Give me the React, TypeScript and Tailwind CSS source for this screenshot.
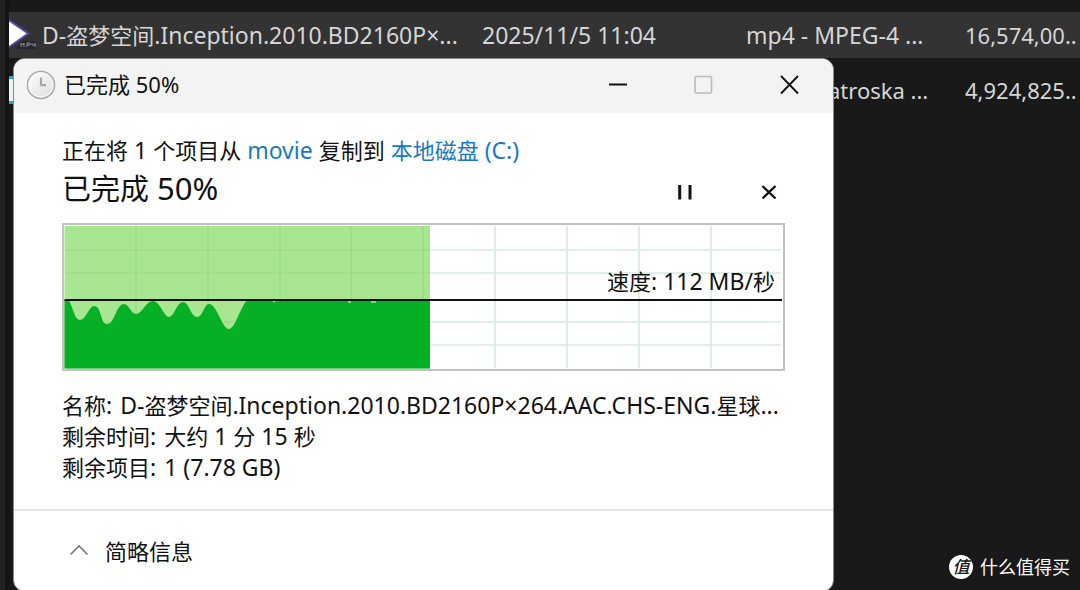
import React from "react";

const GRID_X = [74, 146, 218, 289, 361, 433, 505, 577, 649];
const GRID_Y = [27, 50, 99, 122];

function Cjk({ children }: { children: React.ReactNode }) {
  return <span className="text-[22px]">{children}</span>;
}

function VideoIcon() {
  return (
    <svg width="28" height="34" viewBox="0 0 28 34" aria-hidden="true" className="shrink-0">
      <path d="M0 1 L21 15.5 L0 30 Z" fill="#5b48a8" />
      <path d="M0 3.5 L17.5 15.5 L0 28 Z" fill="#fff" />
      <path d="M8 29 L13 23 H27 V31 H8 Z" fill="#262335" />
      <path d="M12 29 v-4 l1.5 2 l1.5 -2 v4 M18 29 v-4 h3 v2 h-3 M23 25 v2 h3 M26 25 v4" fill="none" stroke="#8f8f98" strokeWidth="1" />
    </svg>
  );
}

function ClockIcon() {
  return (
    <svg width="30" height="30" viewBox="0 0 30 30" aria-hidden="true" className="shrink-0">
      <defs>
        <linearGradient id="face" x1="0" y1="0" x2="1" y2="1">
          <stop offset="0" stopColor="#ffffff" />
          <stop offset="1" stopColor="#dcdcdc" />
        </linearGradient>
      </defs>
      <circle cx="15" cy="15" r="13.6" fill="url(#face)" stroke="#a6a6a6" strokeWidth="1.4" />
      <circle cx="15" cy="15" r="12" fill="none" stroke="#fafafa" strokeWidth="1" />
      <path d="M15 7.5 V15.2 H20" fill="none" stroke="#a8a8a8" strokeWidth="2.2" />
    </svg>
  );
}

function FileList() {
  return (
    <table className="w-full table-fixed border-collapse text-left text-[23px] leading-8 text-[#d6d6d6]">
      <colgroup>
        <col className="w-[473px]" />
        <col className="w-[264px]" />
        <col className="w-[219px]" />
        <col />
      </colgroup>
      <tbody>
        <tr className="h-[46px] bg-[#333333]">
          <td className="p-0">
            <div className="flex items-center gap-[5px] whitespace-nowrap">
              <VideoIcon />
              <span>D-<Cjk>盗梦空间</Cjk>.Inception.2010.BD2160P×...</span>
            </div>
          </td>
          <td className="whitespace-nowrap p-0">2025/11/5 11:04</td>
          <td className="whitespace-nowrap p-0">mp4 - MPEG-4 ...</td>
          <td className="whitespace-nowrap p-0 text-[22px]">16,574,00..</td>
        </tr>
        <tr className="h-[64px]">
          <td className="p-0">
            <svg width="28" height="28" viewBox="0 0 28 28" aria-hidden="true">
              <path d="M0 0 H28 V28 H0 Z" fill="#2fa5b5" />
              <path d="M0 3 H25 V25 H0 Z" fill="#e8f4f6" />
            </svg>
          </td>
          <td className="p-0" />
          <td className="whitespace-nowrap p-0 text-[22px]">mkv - Matroska ...</td>
          <td className="whitespace-nowrap p-0 text-[22px]">4,924,825..</td>
        </tr>
      </tbody>
    </table>
  );
}

function SpeedChart() {
  return (
    <div className="relative">
      <svg viewBox="0 0 723 148" className="block w-full" role="img" aria-label="速度">
        <rect x="1" y="1" width="721" height="146" fill="#fff" stroke="#c2c2c2" strokeWidth="2" />
        <g stroke="#d5ebe0">
          {GRID_X.map((x) => (
            <path key={x} d={`M${x} 3 V145`} strokeWidth="1.6" />
          ))}
          {GRID_Y.map((y) => (
            <path key={y} d={`M3 ${y} H719`} strokeWidth="1.4" />
          ))}
        </g>
        <rect x="2.5" y="3" width="365.5" height="142.5" fill="#a8e692" />
        <g stroke="#93d983" strokeWidth="1.2">
          {GRID_X.filter((x) => x < 368).map((x) => (
            <path key={x} d={`M${x} 3 V145`} />
          ))}
          {GRID_Y.map((y) => (
            <path key={y} d={`M3 ${y} H368`} />
          ))}
        </g>
        <path
          d="M2.5 77 H6 C10 79 12 97 18 97 C24 97 27 83 32 83 C40 83 38 101 45 101 C53 101 54 81 62 81 C67 81 69 91 74 91 C80 91 84 78 91 78 C98 78 102 94 107 94 C112 94 115 79 121 79 C127 79 129 94 135 94 C141 94 142 81 147 81 C155 81 160 106 167 106 C173 106 178 85 185 77 H368 V145.5 H2.5 Z"
          fill="#06b025"
        />
        <path d="M211 78.5 h2 M286 79 h3 M309 79 h5" stroke="#a8e692" strokeWidth="1.5" />
        <path d="M2.5 77 H720" stroke="#111" strokeWidth="2" />
      </svg>
      <span className="absolute right-2.5 top-[42px] leading-8">
        <Cjk>速度</Cjk>: 112 MB/<Cjk>秒</Cjk>
      </span>
    </div>
  );
}

function CopyDialog() {
  return (
    <section
      aria-label="已完成 50%"
      className="absolute left-[13px] right-4 top-[58px] max-w-[821px] overflow-hidden rounded-xl border border-[#8a8a8a] bg-white text-[23px] text-[#111]"
    >
      <header className="flex h-[54px] items-start bg-[#f3f3f3] pl-3">
        <div className="flex flex-1 items-start gap-2 pt-[11px]">
          <ClockIcon />
          <h1 className="text-[22px] leading-7">已完成 50%</h1>
        </div>
        <button type="button" aria-label="最小化" className="flex h-[52px] w-[86px] items-center justify-center">
          <svg width="20" height="20" viewBox="0 0 20 20"><path d="M1 9.5 H19" stroke="#111" strokeWidth="1.8" /></svg>
        </button>
        <button type="button" aria-label="最大化" disabled className="flex h-[52px] w-[86px] items-center justify-center">
          <svg width="20" height="20" viewBox="0 0 20 20"><rect x="1" y="1.5" width="16.5" height="16.5" rx="1.5" fill="none" stroke="#bcbcbc" strokeWidth="1.7" /></svg>
        </button>
        <button type="button" aria-label="关闭" className="flex h-[52px] w-[86px] items-center justify-center">
          <svg width="20" height="20" viewBox="0 0 20 20"><path d="M1 1 L18 18.5 M18 1 L1 18.5" stroke="#111" strokeWidth="1.8" /></svg>
        </button>
      </header>

      <div className="px-12 pb-[26px] pt-[19px]">
        <p className="leading-9">
          <Cjk>正在将</Cjk> 1 <Cjk>个项目从</Cjk>{" "}
          <a href="#movie" className="text-[#1a78c2]">movie</a> <Cjk>复制到</Cjk>{" "}
          <a href="#disk-c" className="text-[#1a78c2]"><Cjk>本地磁盘</Cjk> (C:)</a>
        </p>
        <div className="mb-[15px] flex h-10 items-end">
          <h2 className="flex-1 self-start text-[31px] leading-10">
            <span className="text-[29px]">已完成</span> 50%
          </h2>
          <button type="button" aria-label="暂停" className="flex h-8 w-8 items-center justify-center">
            <svg width="16" height="16" viewBox="0 0 16 16"><path d="M2.7 1 V15.5 M13 1 V15.5" stroke="#111" strokeWidth="3" /></svg>
          </button>
          <button type="button" aria-label="取消" className="ml-[52px] flex h-8 w-8 items-center justify-center">
            <svg width="16" height="16" viewBox="0 0 16 16"><path d="M1.5 2 L14.5 14.5 M14.5 2 L1.5 14.5" stroke="#111" strokeWidth="2.4" /></svg>
          </button>
        </div>
        <SpeedChart />
        <dl className="mt-[19px] leading-[31px]">
          <div className="flex gap-2 whitespace-nowrap">
            <dt><Cjk>名称</Cjk>:</dt>
            <dd>D-<Cjk>盗梦空间</Cjk>.Inception.2010.BD2160P×264.AAC.CHS-ENG.<Cjk>星球</Cjk>...</dd>
          </div>
          <div className="flex gap-2">
            <dt><Cjk>剩余时间</Cjk>:</dt>
            <dd><Cjk>大约</Cjk> 1 <Cjk>分</Cjk> 15 <Cjk>秒</Cjk></dd>
          </div>
          <div className="flex gap-2">
            <dt><Cjk>剩余项目</Cjk>:</dt>
            <dd>1 (7.78 GB)</dd>
          </div>
        </dl>
      </div>

      <footer className="flex h-[82px] items-center border-t-2 border-[#e5e5e5] pl-[55px]">
        <button type="button" className="flex items-center gap-4 text-[22px] leading-8">
          <svg width="20" height="20" viewBox="0 0 20 20" aria-hidden="true"><path d="M1.5 13.5 L10 5 L18.5 13.5" fill="none" stroke="#777" strokeWidth="1.6" /></svg>
          简略信息
        </button>
      </footer>
    </section>
  );
}

export default function App() {
  return (
    <main className="relative flex min-h-screen overflow-hidden bg-[#191919] font-['Noto_Sans','Noto_Sans_CJK_SC',sans-serif]">
      <div className="w-[9px] shrink-0 border-r-4 border-[#141414] bg-[#222222]" />
      <div className="min-w-0 flex-1 pt-3">
        <FileList />
      </div>
      <CopyDialog />
      <div className="absolute bottom-[11px] right-2.5 flex items-center gap-[7px] text-[18px] leading-6 text-white">
        <span className="flex h-6 w-6 items-center justify-center rounded-full bg-white text-[17px] font-medium italic text-[#191919]">值</span>
        <span>什么值得买</span>
      </div>
    </main>
  );
}
